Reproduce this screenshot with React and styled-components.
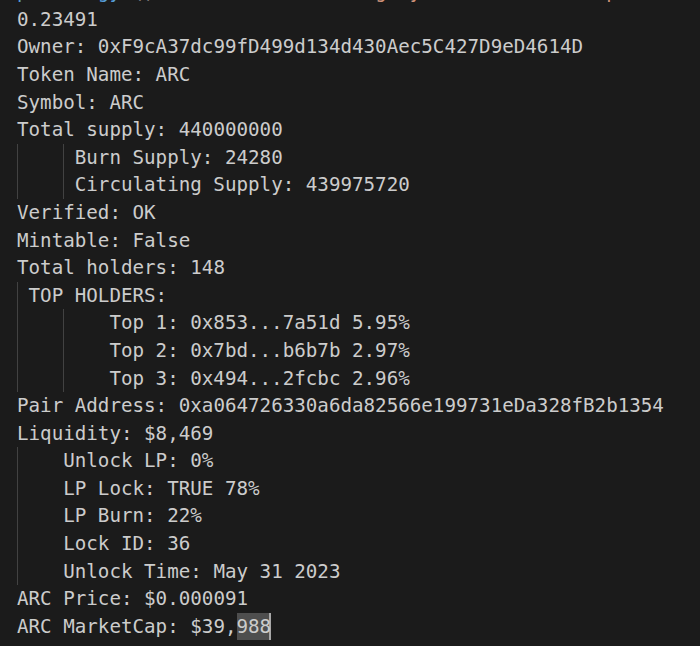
import React from "react";
import styled, { createGlobalStyle } from "styled-components";

const Global = createGlobalStyle`
  html, body {
    margin: 0;
    padding: 0;
    background: #1b1b1b;
    overflow: hidden;
  }
`;

const Terminal = styled.div`
  width: 700px;
  height: 646px;
  overflow: hidden;
  background: #1b1b1b;
  color: #cccccc;
  font-family: "DejaVu Sans Mono", "Liberation Mono", monospace;
  font-size: 19.2px;
  box-sizing: border-box;
  padding-left: 17px;
`;

const Output = styled.div`
  margin-top: -21.8px;
  display: flex;
  flex-direction: column;
`;

const Line = styled.div`
  height: 27.6px;
  line-height: 27.6px;
  white-space: pre;
`;

const Group = styled.div`
  border-left: 1px solid #424242;
  margin-left: ${(p) => p.$offset || 0}ch;
  padding-left: calc(${(p) => p.$indent}ch - 1px);
  display: flex;
  flex-direction: column;
`;

const Blue = styled.span`
  color: #569cd6;
`;

const Orange = styled.span`
  color: #ce9178;
`;

const Selected = styled.span`
  display: inline-block;
  height: 27.6px;
  background: #4e4e4e;
  box-shadow: inset -2px 0 0 #a8a8a8;
`;

const Icon = styled.span`
  color: #3a6ea5;
`;

export default function App() {
  return (
    <>
      <Global />
      <Terminal>
        <Output>
          <Line>
            <Blue>print  gy</Blue>
            {" ()                   "}
            <Orange>g  y</Orange>
            {"                "}
            <Orange>p</Orange>
          </Line>
          <Line>0.23491</Line>
          <Line>Owner: 0xF9cA37dc99fD499d134d430Aec5C427D9eD4614D</Line>
          <Line>Token Name: ARC</Line>
          <Line>Symbol: ARC</Line>
          <Line>Total supply: 440000000</Line>
          <Group $indent={4}>
            <Group $indent={1}>
              <Line>Burn Supply: 24280</Line>
              <Line>Circulating Supply: 439975720</Line>
            </Group>
          </Group>
          <Line>Verified: OK</Line>
          <Line>Mintable: False</Line>
          <Line>Total holders: 148</Line>
          <Group $indent={1}>
            <Line>TOP HOLDERS:</Line>
            <Group $offset={3} $indent={4}>
              <Line>Top 1: 0x853...7a51d 5.95%</Line>
              <Line>Top 2: 0x7bd...b6b7b 2.97%</Line>
              <Line>Top 3: 0x494...2fcbc 2.96%</Line>
            </Group>
          </Group>
          <Line>Pair Address: 0xa064726330a6da82566e199731eDa328fB2b1354</Line>
          <Line>Liquidity: $8,469</Line>
          <Group $indent={4}>
            <Line>Unlock LP: 0%</Line>
            <Line>LP Lock: TRUE 78%</Line>
            <Line>LP Burn: 22%</Line>
            <Line>Lock ID: 36</Line>
            <Line>Unlock Time: May 31 2023</Line>
          </Group>
          <Line>ARC Price: $0.000091</Line>
          <Line>
            ARC MarketCap: $39,<Selected>988</Selected>
          </Line>
          <Line>
            {"       "}
            <Icon>■</Icon>
            {" WWWWMMWTM HU"}
          </Line>
        </Output>
      </Terminal>
    </>
  );
}
